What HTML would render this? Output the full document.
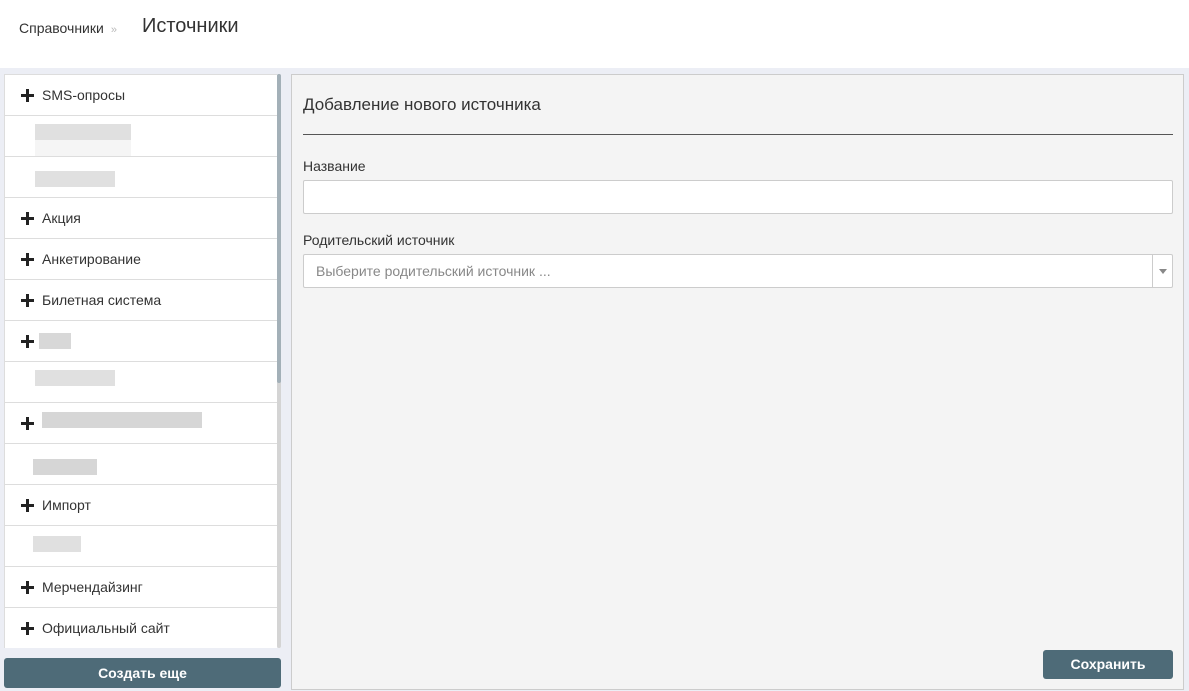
<!DOCTYPE html>
<html><head><meta charset="utf-8"><style>
*{box-sizing:border-box;margin:0;padding:0}
body{width:1189px;height:691px;background:#eceef5;font-family:"Liberation Sans",sans-serif;color:#333;position:relative;overflow:hidden}
.hdr{position:absolute;left:0;top:0;width:1189px;height:68px;background:#fff}
.bc{position:absolute;left:19px;top:20px;font-size:14px;color:#333}
.bc span{color:#bbb;font-size:11px;margin-left:4px}
.ttl{position:absolute;left:142px;top:15px;font-size:20px;color:#333}
.list{position:absolute;left:4px;top:74px;width:273px;height:574px;background:#fff;border-left:1px solid #ddd;border-top:1px solid #ddd;overflow:hidden}
.row{height:41px;border-bottom:1px solid #ddd;position:relative;font-size:14px;line-height:41px;padding-left:37px}
.row .p{position:absolute;left:16px;top:14px;width:13px;height:13px}
.row .p:before{content:"";position:absolute;left:0;top:5px;width:13px;height:3px;background:#222}
.row .p:after{content:"";position:absolute;left:5px;top:0;width:3px;height:13px;background:#222}
.bl{position:absolute;background:#e0e0e0}
.sb{position:absolute;left:277px;top:74px;width:4px;height:574px;background:#d4d4d4;border-radius:2px}
.sb i{position:absolute;left:0;top:0;width:4px;height:309px;background:#a3b0b8;border-radius:2px}
.btn{position:absolute;background:#4e6b78;color:#fff;font-size:14px;font-weight:bold;text-align:center;border-radius:3px}
.panel{position:absolute;left:291px;top:74px;width:893px;height:616px;background:#f4f4f4;border:1px solid #ccc}
.h2{position:absolute;left:11px;top:20px;font-size:17px;color:#333}
.hr{position:absolute;left:11px;top:59px;width:870px;height:1px;background:#555}
.lbl{position:absolute;left:11px;font-size:14px;color:#333}
.inp{position:absolute;left:11px;width:870px;height:34px;background:#fff;border:1px solid #ccc;border-radius:2px}
</style></head><body>
<div class="hdr"><div class="bc">Справочники<span> »</span></div><div class="ttl">Источники</div></div>
<div class="list">
<div class="row"><i class="p"></i>SMS-опросы</div>
<div class="row"><div class="bl" style="left:30px;top:8px;width:96px;height:16px"></div><div class="bl" style="left:30px;top:24px;width:96px;height:16px;background:#f5f5f5"></div></div>
<div class="row"><div class="bl" style="left:30px;top:14px;width:80px;height:16px"></div></div>
<div class="row"><i class="p"></i>Акция</div>
<div class="row"><i class="p"></i>Анкетирование</div>
<div class="row"><i class="p"></i>Билетная система</div>
<div class="row"><i class="p"></i><div class="bl" style="left:34px;top:12px;width:32px;height:16px;background:#d8d8d8"></div></div>
<div class="row"><div class="bl" style="left:30px;top:8px;width:80px;height:16px"></div></div>
<div class="row"><i class="p"></i><div class="bl" style="left:37px;top:9px;width:160px;height:16px;background:#d6d6d6"></div></div>
<div class="row"><div class="bl" style="left:28px;top:15px;width:64px;height:16px;background:#d6d6d6"></div></div>
<div class="row"><i class="p"></i>Импорт</div>
<div class="row"><div class="bl" style="left:28px;top:10px;width:48px;height:16px"></div></div>
<div class="row"><i class="p"></i>Мерчендайзинг</div>
<div class="row"><i class="p"></i>Официальный сайт</div>
</div>
<div class="sb"><i></i></div>
<div class="btn" style="left:4px;top:658px;width:277px;height:30px;line-height:30px">Создать еще</div>
<div class="panel">
<div class="h2">Добавление нового источника</div>
<div class="hr"></div>
<div class="lbl" style="top:83px">Название</div>
<div class="inp" style="top:105px"></div>
<div class="lbl" style="top:157px">Родительский источник</div>
<div class="inp" style="top:179px;font-size:14px;color:#888;line-height:32px;padding-left:12px">Выберите родительский источник ...
<div style="position:absolute;right:19px;top:0;width:1px;height:32px;background:#ccc"></div>
<div style="position:absolute;right:5px;top:14px;border-left:4px solid transparent;border-right:4px solid transparent;border-top:5px solid #888"></div></div>
<div class="btn" style="left:751px;top:575px;width:130px;height:29px;line-height:29px">Сохранить</div>
</div>
</body></html>
